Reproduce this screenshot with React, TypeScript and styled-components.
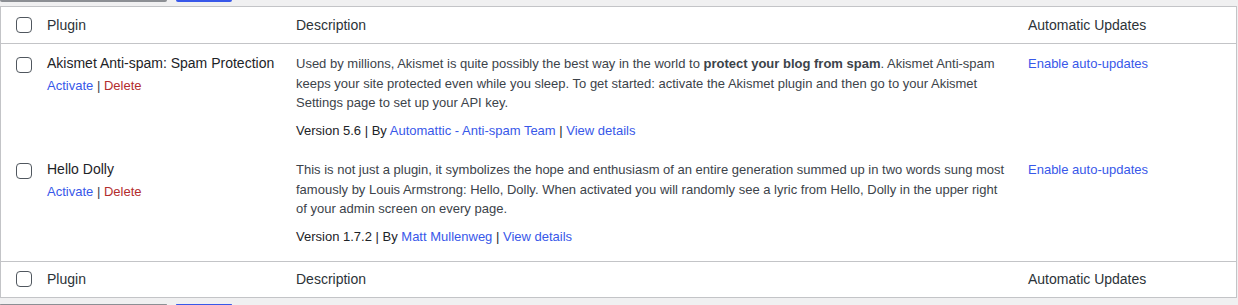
import styled, { createGlobalStyle } from "styled-components";

const GlobalStyle = createGlobalStyle`
    html, body {
        margin: 0;
        padding: 0;
        background: #f0f0f1;
        font-family: "Liberation Sans", Arial, sans-serif;
        color: #3c434a;
    }
`;

const Nav = styled.div`
    display: flex;
    align-items: flex-end;
    gap: 9px;
    height: 2px;
    overflow: hidden;
`;
const SelectStub = styled.div`
    width: 167px;
    height: 2px;
    background: #8c8f94;
    border-radius: 0 0 3px 3px;
`;
const ButtonStub = styled.div`
    width: 56px;
    height: 2px;
    background: #3858e9;
    border-radius: 0 0 3px 3px;
`;

const Table = styled.table<{ $top: number; $bottom: number }>`
    width: 1237px;
    margin: ${(p) => p.$top}px 0 ${(p) => p.$bottom}px;
    border: 1px solid #c3c4c7;
    border-spacing: 0;
    border-collapse: separate;
    table-layout: fixed;
    background: #fff;
`;
const HeadCell = styled.th<{ $w: number }>`
    width: ${(p) => p.$w}px;
    box-sizing: border-box;
    padding: 8px 10px;
    line-height: 20px;
    text-align: left;
    font-weight: 400;
    font-size: 14px;
    color: #2c3338;
    vertical-align: middle;
`;
const HeadRow = styled.tr<{ $pos: "top" | "bottom" }>`
    & > th {
        ${(p) =>
            p.$pos === "top"
                ? "border-bottom: 1px solid #c3c4c7;"
                : "border-top: 1px solid #c3c4c7; padding-top: 7px; padding-bottom: 8px;"}
    }
`;
const CheckHead = styled.th`
    width: 36px;
    box-sizing: border-box;
    padding: 0 0 0 15px;
    text-align: left;
    vertical-align: middle;
`;
const CheckCell = styled.td`
    padding: 13px 0 0 15px;
    vertical-align: top;
`;
const Box = styled.span`
    display: block;
    width: 16px;
    height: 16px;
    box-sizing: border-box;
    border: 1px solid #50575e;
    border-radius: 4px;
    background: #fff;
`;
const Cell = styled.td<{ $last?: boolean }>`
    padding: 10px 10px ${(p) => (p.$last ? 15 : 10)}px;
    vertical-align: top;
    font-size: 13px;
    line-height: 19.5px;
`;
const Title = styled.div`
    font-size: 14px;
    line-height: 19px;
    color: #1d2327;
`;
const Actions = styled.div`
    margin-top: 3px;
    font-size: 13px;
    line-height: 20px;
    color: #a7aaad;
`;
const Link = styled.a<{ $danger?: boolean }>`
    color: ${(p) => (p.$danger ? "#b32d2e" : "#3858e9")};
    text-decoration: none;
`;
const Sep = styled.span`
    color: #3c434a;
`;
const Desc = styled.p`
    margin: 0 0 8px;
    color: #3c434a;
`;
const Meta = styled.div`
    color: #1d2327;
`;

interface Plugin {
    name: string;
    desc: React.ReactNode;
    version: string;
    author: string;
}

const plugins: Plugin[] = [
    {
        name: "Akismet Anti-spam: Spam Protection",
        desc: (
            <>
                Used by millions, Akismet is quite possibly the best way in the world to{" "}
                <strong>protect your blog from spam</strong>. Akismet Anti-spam
                <br />
                keeps your site protected even while you sleep. To get started: activate the Akismet plugin and then go to your Akismet
                <br />
                Settings page to set up your API key.
            </>
        ),
        version: "5.6",
        author: "Automattic - Anti-spam Team",
    },
    {
        name: "Hello Dolly",
        desc: (
            <>
                This is not just a plugin, it symbolizes the hope and enthusiasm of an entire generation summed up in two words sung most famously by Louis Armstrong: Hello, Dolly. When activated you will randomly see a lyric from Hello, Dolly in the upper right of your admin screen on every page.
            </>
        ),
        version: "1.7.2",
        author: "Matt Mullenweg",
    },
];

const Header = ({ pos }: { pos: "top" | "bottom" }) => (
    <HeadRow $pos={pos}>
        <CheckHead>
            <Box />
        </CheckHead>
        <HeadCell $w={249}>Plugin</HeadCell>
        <HeadCell $w={732}>Description</HeadCell>
        <HeadCell $w={218}>Automatic Updates</HeadCell>
    </HeadRow>
);

const App = () => {
    return (
        <>
            <GlobalStyle />
            <Nav>
                <SelectStub />
                <ButtonStub />
            </Nav>
            <Table $top={4} $bottom={6}>
                <thead>
                    <Header pos="top" />
                </thead>
                <tbody>
                    {plugins.map((p, i) => {
                        const last = i === plugins.length - 1;
                        return (
                            <tr key={p.name}>
                                <CheckCell>
                                    <Box />
                                </CheckCell>
                                <Cell $last={last}>
                                    <Title>{p.name}</Title>
                                    <Actions>
                                        <Link href="#">Activate</Link> <Sep>|</Sep>{" "}
                                        <Link href="#" $danger>
                                            Delete
                                        </Link>
                                    </Actions>
                                </Cell>
                                <Cell $last={last}>
                                    <Desc>{p.desc}</Desc>
                                    <Meta>
                                        Version {p.version} | By <Link href="#">{p.author}</Link> |{" "}
                                        <Link href="#">View details</Link>
                                    </Meta>
                                </Cell>
                                <Cell $last={last}>
                                    <Link href="#">Enable auto-updates</Link>
                                </Cell>
                            </tr>
                        );
                    })}
                </tbody>
                <tfoot>
                    <Header pos="bottom" />
                </tfoot>
            </Table>
            <Nav>
                <SelectStub />
                <ButtonStub />
            </Nav>
        </>
    );
};

export default App;
